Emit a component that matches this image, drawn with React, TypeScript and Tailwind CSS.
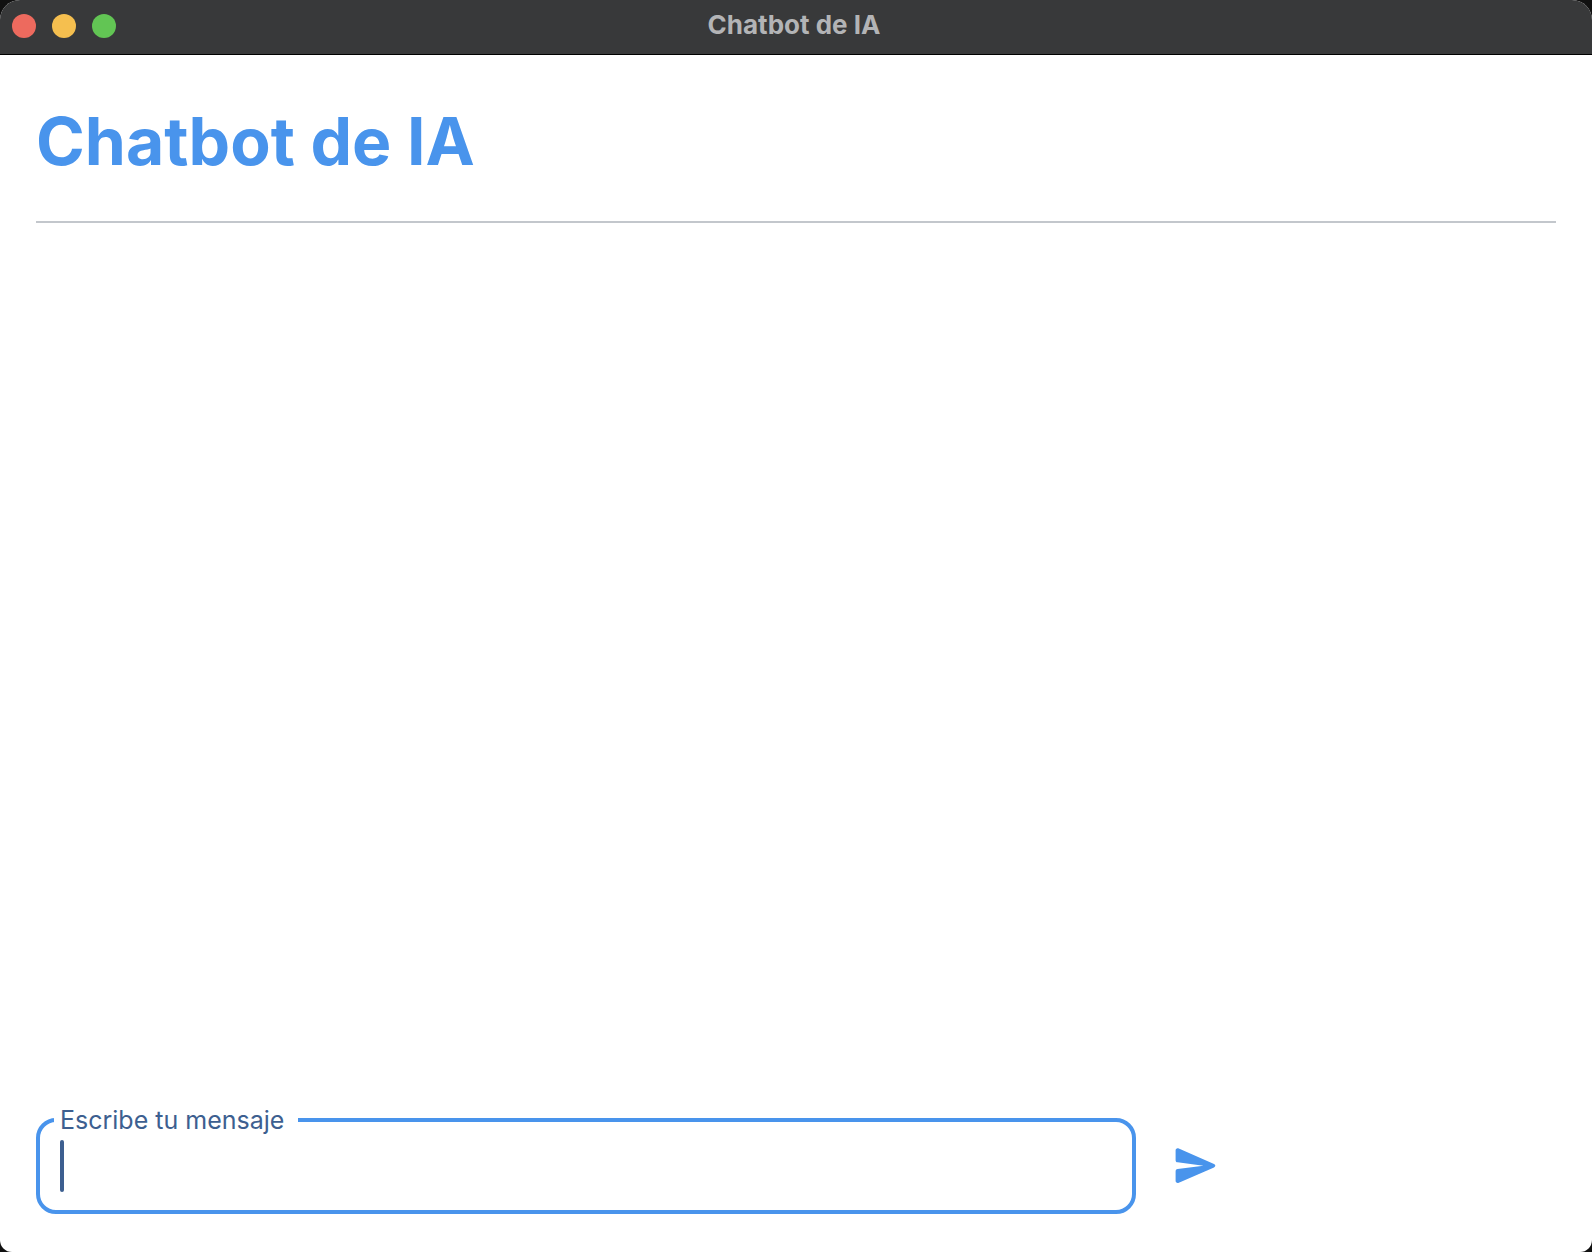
import { useState } from "react";

function TitleBar() {
  return (
    <header className="relative flex h-[55px] shrink-0 items-center justify-center rounded-t-[20px] border-b border-black bg-[#38393a]">
      <div className="absolute left-3 top-[14px] flex gap-4">
        <button aria-label="Cerrar" className="size-6 rounded-full bg-[#ed6a5e]" />
        <button aria-label="Minimizar" className="size-6 rounded-full bg-[#f5bf4f]" />
        <button aria-label="Ampliar" className="size-6 rounded-full bg-[#62c554]" />
      </div>
      <span className="pr-1 pb-1 text-[26px] leading-8 font-bold text-[#b3b4b6]">Chatbot de IA</span>
    </header>
  );
}

function SendIcon() {
  return (
    <svg viewBox="0 0 48 48" className="size-12" fill="currentColor" aria-hidden="true">
      <path d="M6.8 6.5 42 22.1C43.8 22.9 43.8 24.6 42 25.4L6.8 40.8C5 41.5 3.6 40.5 3.6 38.8V29.4C3.6 28 4.2 27.2 5.6 27L31.5 23.7 5.6 20.3C4.2 20.1 3.6 19.3 3.6 17.9V8.5C3.6 6.7 5 5.7 6.8 6.5Z" />
    </svg>
  );
}

export default function App() {
  const [message, setMessage] = useState("");

  return (
    <div className="min-h-screen bg-[#111111] font-[Inter,sans-serif]">
      <div className="flex min-h-screen flex-col rounded-t-[20px] rounded-b-xl bg-white">
        <TitleBar />
        <main className="flex flex-1 flex-col px-9 pb-[38px]">
          <h1 className="border-b-2 border-[#c3c7cc] pt-[46px] pb-10 text-[66px] leading-[80px] font-bold text-[#4994ec]">
            Chatbot de IA
          </h1>
          <section aria-label="Conversación" className="flex-1" />
          <form className="flex items-center gap-9" onSubmit={(e) => e.preventDefault()}>
            <div className="relative max-w-[1100px] flex-1">
              <input
                id="message"
                type="text"
                value={message}
                onChange={(e) => setMessage(e.target.value)}
                className="block h-24 w-full rounded-[20px] border-4 border-[#4994ec] bg-white px-5 text-[32px] text-[#3d5f90] caret-[#3d5f90] outline-none"
              />
              <label
                htmlFor="message"
                className="absolute -top-[14px] left-[18px] w-[244px] bg-white pl-1.5 text-[25px] leading-8 text-[#3d5f90]"
              >
                Escribe tu mensaje
              </label>
              {message === "" && (
                <span className="pointer-events-none absolute top-[22px] left-6 h-[52px] w-1 rounded-full bg-[#3d5f90]" />
              )}
            </div>
            <button type="submit" aria-label="Enviar" className="text-[#4994ec]">
              <SendIcon />
            </button>
          </form>
        </main>
      </div>
    </div>
  );
}
